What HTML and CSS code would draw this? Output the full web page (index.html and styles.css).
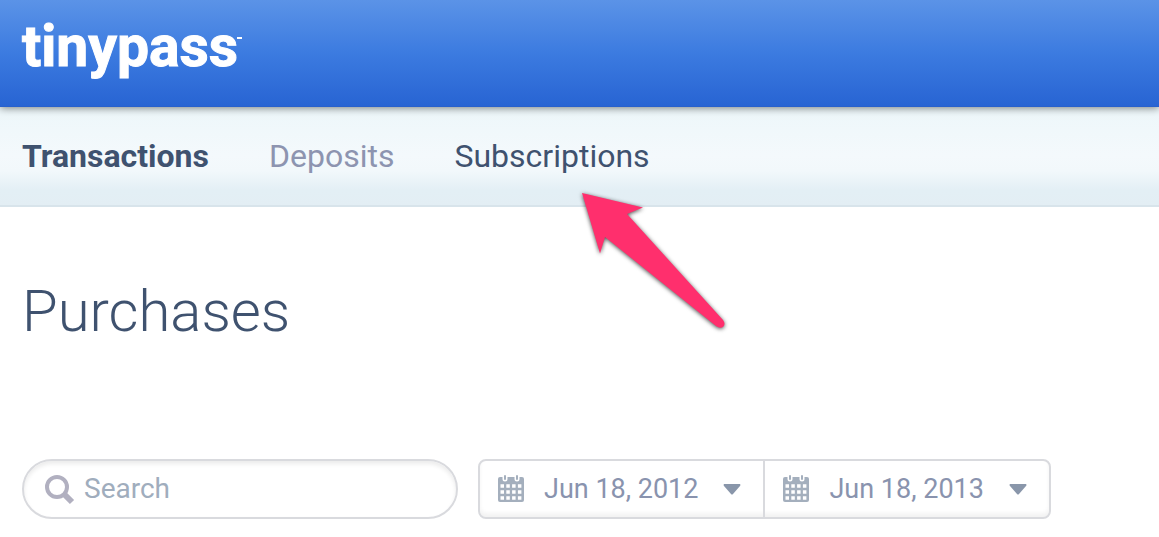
FILE: index.html
```
<!DOCTYPE html>
<html lang="en">

<head>
    <meta charset="UTF-8">
    <meta name="viewport" content="width=device-width, initial-scale=1.0">
    <title>Tinypass - Purchases</title>
    <link rel="stylesheet" href="styles.css">
</head>

<body>

    <header class="header">
        <a class="logo" href="#">tinypass</a>
    </header>

    <nav class="nav">
        <a class="nav_item active" href="#">Transactions</a>
        <a class="nav_item muted" href="#">Deposits</a>
        <a class="nav_item" href="#">Subscriptions
            <svg class="pointer" width="152" height="144" viewBox="0 0 152 144" aria-hidden="true">
                <path d="M4 4 L65 18.500 L49 25 L145 131 Q148 135 145 138 Q142 140 138 137 L27 48 L22 64.500 Z" fill="#ff2f6d" />
            </svg>
        </a>
    </nav>

    <main class="content">
        <h1 class="title">Purchases</h1>

        <form class="filters">
            <label class="search">
                <svg width="32" height="32" viewBox="0 0 32 32" aria-hidden="true">
                    <circle cx="13" cy="14" r="10" fill="none" stroke="#b1b0c0" stroke-width="4" />
                    <path d="M20 21 L28 29" stroke="#b1b0c0" stroke-width="6" />
                </svg>
                <input type="text" placeholder="Search" aria-label="Search">
            </label>

            <div class="dates">
                <button type="button" class="date">
                    <svg width="28" height="28" viewBox="0 0 28 28" aria-hidden="true">
                        <rect x="1" y="2" width="26" height="25" rx="2" fill="#a4afbd" />
                        <path d="M8 0 V4 M20 0 V4" stroke="#fff" stroke-width="5" stroke-linecap="round" />
                        <path d="M8 1 V4 M20 1 V4" stroke="#a4afbd" stroke-width="2" stroke-linecap="round" />
                        <path d="M3.500 11 H25 M3.500 17 H25 M3.500 23 H25" stroke="#fff" stroke-width="3.500" stroke-dasharray="3.500 2.300" />
                    </svg>
                    <span class="date_text">Jun 18, 2012</span>
                    <svg width="18" height="11" viewBox="0 0 18 11" aria-hidden="true">
                        <path d="M1 0 H17 Q18 1 17 2 L10 10 Q9 11 8 10 L1 2 Q0 1 1 0 Z" fill="#8996aa" />
                    </svg>
                </button>
                <button type="button" class="date">
                    <svg width="28" height="28" viewBox="0 0 28 28" aria-hidden="true">
                        <rect x="1" y="2" width="26" height="25" rx="2" fill="#a4afbd" />
                        <path d="M8 0 V4 M20 0 V4" stroke="#fff" stroke-width="5" stroke-linecap="round" />
                        <path d="M8 1 V4 M20 1 V4" stroke="#a4afbd" stroke-width="2" stroke-linecap="round" />
                        <path d="M3.500 11 H25 M3.500 17 H25 M3.500 23 H25" stroke="#fff" stroke-width="3.500" stroke-dasharray="3.500 2.300" />
                    </svg>
                    <span class="date_text">Jun 18, 2013</span>
                    <svg width="18" height="11" viewBox="0 0 18 11" aria-hidden="true">
                        <path d="M1 0 H17 Q18 1 17 2 L10 10 Q9 11 8 10 L1 2 Q0 1 1 0 Z" fill="#8996aa" />
                    </svg>
                </button>
            </div>
        </form>
    </main>

</body>

</html>
```
FILE: styles.css
```
* {
    box-sizing: border-box;
}

body {
    margin: 0;
    background: #fff;
    color: #3f526f;
    font-family: Roboto, "Liberation Sans", sans-serif;
}

.header {
    position: relative;
    z-index: 1;
    padding: 13px 22px 26px;
    background: linear-gradient(#5b93e7, #3c7be0 50%, #2864d3);
    border-bottom: 1px solid #2860cc;
    box-shadow: 0 1px 8px rgba(0, 0, 0, 0.5);
}

.logo {
    position: relative;
    display: inline-block;
    color: #fff;
    font-size: 57px;
    font-weight: 700;
    line-height: 67px;
    text-decoration: none;
    vertical-align: top;
    -webkit-text-stroke: 1px #fff;
}

/* Small trademark dash */
.logo::after {
    content: "";
    position: absolute;
    top: 24px;
    right: -4px;
    width: 5px;
    height: 2px;
    background: #fff;
}

.nav {
    display: flex;
    gap: 60px;
    padding: 30px 22px 29px;
    background: linear-gradient(#edf7fa, #f4f9fc 50%, #f2f8fb 65%, #e3eff5 85%, #e3eef4);
    border-bottom: 2px solid #d8e4eb;
}

.nav_item {
    position: relative;
    color: #3f526f;
    font-size: 32px;
    line-height: 39px;
    text-decoration: none;
}

.nav_item.active {
    font-weight: 700;
}

.nav_item.muted {
    color: #8d94b0;
}

.pointer {
    position: absolute;
    top: 52px;
    left: 124px;
    filter: drop-shadow(0 1px 2px rgba(0, 0, 0, 0.7));
}

.content {
    padding: 68px 22px 18px;
}

.title {
    margin: 0;
    font-size: 58px;
    font-weight: 300;
    line-height: 72px;
}

.filters {
    display: flex;
    gap: 20px;
    margin-top: 112px;
}

.search {
    display: flex;
    align-items: center;
    gap: 8px;
    flex: 0 1 436px;
    min-width: 0;
    height: 60px;
    padding: 0 20px;
    border: 2px solid #d9dade;
    border-radius: 30px;
    box-shadow: inset 0 3px 4px rgba(0, 0, 0, 0.08);
}

.search svg {
    flex: none;
}

.search input {
    flex: 1;
    min-width: 0;
    padding: 0;
    border: 0;
    outline: 0;
    background: none;
    color: #3f526f;
    font: 28px/34px Roboto, "Liberation Sans", sans-serif;
}

.search input::placeholder {
    color: #a0adbd;
    opacity: 1;
}

.dates {
    display: flex;
    border: 2px solid #d9dade;
    border-radius: 8px;
    box-shadow: inset 0 -4px 4px rgba(0, 0, 0, 0.05);
}

.date {
    display: flex;
    align-items: center;
    padding: 0 22px 0 17px;
    border: 0;
    background: none;
    color: #8993ae;
    font: 27px/34px Roboto, "Liberation Sans", sans-serif;
    white-space: nowrap;
}

.date + .date {
    border-left: 2px solid #d9dade;
}

.date_text {
    margin: 0 25px 0 19px;
}
```
